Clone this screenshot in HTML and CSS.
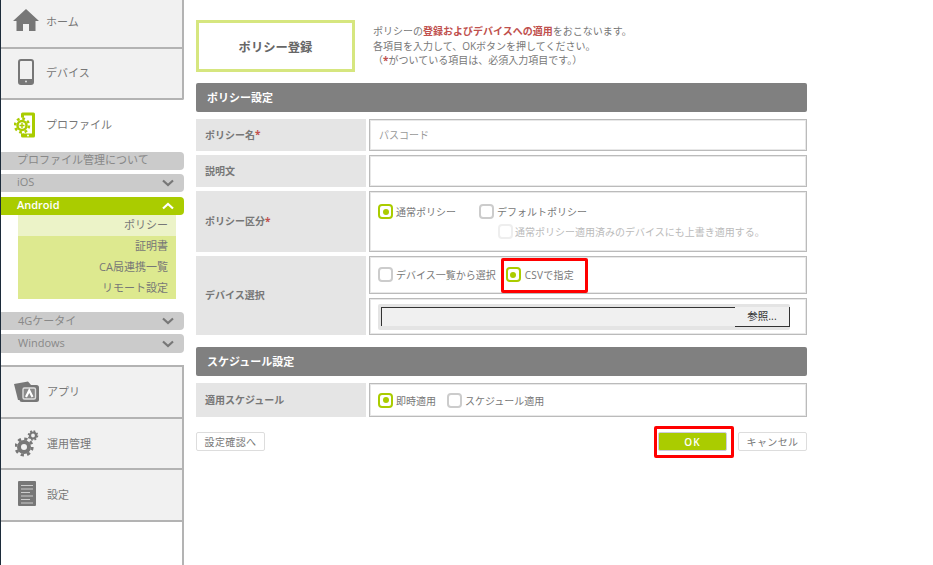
FILE: index.html
```html
<!DOCTYPE html>
<html lang="ja">
<head>
<meta charset="utf-8">
<title>ポリシー登録</title>
<link rel="stylesheet" href="styles.css">
</head>
<body>
<div class="page">
  <aside class="side">
    <a class="nav nav-first">
      <span class="ico"><svg width="26" height="24" viewBox="0 0 26 24"><path fill="#777" d="M13 0 L26 12 L22.500 12 L22.500 22 L16 22 L16 15 L10 15 L10 22 L3.500 22 L3.500 12 L0 12 Z"/></svg></span>
      <span>ホーム</span>
    </a>
    <a class="nav nav-device">
      <span class="ico"><svg width="16" height="26" viewBox="0 0 16 26"><rect x="1" y="1" width="14" height="24" rx="2" fill="none" stroke="#777" stroke-width="2"/><rect x="1" y="20" width="14" height="5" fill="#777"/><circle cx="8" cy="22.500" r="1" fill="#ddd"/></svg></span>
      <span>デバイス</span>
    </a>
    <a class="nav-active">
      <span class="ico"><svg width="24" height="28" viewBox="0 0 24 28"><rect x="7" y="2.500" width="14" height="25" rx="1.500" fill="#aacc00"/><rect x="10" y="5.500" width="8" height="18" fill="#fff"/><circle cx="14" cy="25.500" r="1" fill="#fff"/><circle cx="8" cy="15.500" r="8" fill="#fff"/><circle cx="8" cy="15.500" r="7" fill="none" stroke="#aacc00" stroke-width="2.500" stroke-dasharray="2.750 2.750"/><circle cx="8" cy="15.500" r="4.500" fill="#fff" stroke="#aacc00" stroke-width="2.500"/><path stroke="#aacc00" stroke-width="1.400" d="M8 13 V18 M5.500 15.500 H10.500"/></svg></span>
      <span>プロファイル</span>
    </a>
    <a class="pill pill-about">プロファイル管理について</a>
    <a class="pill pill-ios"><span>iOS</span><svg class="chev" width="12" height="8" viewBox="0 0 12 8"><path d="M1 1.500 L6 6 L11 1.500" fill="none" stroke="#777" stroke-width="2.200"/></svg></a>
    <a class="pill pill-open"><span>Android</span><svg class="chev" width="12" height="8" viewBox="0 0 12 8"><path d="M1 6.500 L6 2 L11 6.500" fill="none" stroke="#fff" stroke-width="2.200"/></svg></a>
    <ul class="sub">
      <li class="sub-on">ポリシー</li>
      <li>証明書</li>
      <li>CA局連携一覧</li>
      <li>リモート設定</li>
    </ul>
    <a class="pill pill-4g"><span>4Gケータイ</span><svg class="chev" width="12" height="8" viewBox="0 0 12 8"><path d="M1 1.500 L6 6 L11 1.500" fill="none" stroke="#777" stroke-width="2.200"/></svg></a>
    <a class="pill pill-win"><span>Windows</span><svg class="chev" width="12" height="8" viewBox="0 0 12 8"><path d="M1 1.500 L6 6 L11 1.500" fill="none" stroke="#777" stroke-width="2.200"/></svg></a>
    <div class="lower">
      <a class="nav nav-app">
        <span class="ico"><svg width="26" height="24" viewBox="0 0 26 24"><path fill="#777" d="M0 5 L14 2.500 L17 6 L8 7 L7 21 L4 21 Z"/><rect x="5.500" y="6" width="19.500" height="17" rx="2.500" fill="#777"/><rect x="9" y="9" width="12.500" height="11" rx="1.500" fill="#8a8a8a" stroke="#ddd" stroke-width="1.400"/><path fill="none" stroke="#fff" stroke-width="2.200" d="M12 18 L15.250 11.500 L18.500 18"/></svg></span>
        <span>アプリ</span>
      </a>
      <a class="nav nav-ops">
        <span class="ico"><svg width="24" height="28" viewBox="0 0 24 28"><g fill="none" stroke="#777"><circle cx="9" cy="18" r="5" stroke-width="4"/><circle cx="9" cy="18" r="8.200" stroke-width="2.800" stroke-dasharray="3.220 3.220"/><circle cx="18" cy="6.500" r="3" stroke-width="2.200"/><circle cx="18" cy="6.500" r="4.500" stroke-width="1.600" stroke-dasharray="1.770 1.770"/></g></svg></span>
        <span>運用管理</span>
      </a>
      <a class="nav nav-set">
        <span class="ico"><svg width="18" height="26" viewBox="0 0 18 26"><rect width="18" height="25" rx="1" fill="#777"/><path stroke="#ccc" stroke-width="1" d="M3 4.500 H15 M3 8 H15 M3 11.500 H12 M3 15 H15 M3 18.500 H12 M3 22 H15"/></svg></span>
        <span>設定</span>
      </a>
    </div>
  </aside>

  <main class="main">
    <header class="head">
      <h1 class="title">ポリシー登録</h1>
      <div class="lead">
        <p>ポリシーの<strong>登録およびデバイスへの適用</strong>をおこないます。</p>
        <p>各項目を入力して、OKボタンを押してください。</p>
        <p>（<strong>*</strong>がついている項目は、必須入力項目です。）</p>
      </div>
    </header>

    <h2 class="bar">ポリシー設定</h2>
    <div class="row row-name">
      <div class="lab">ポリシー名<em>*</em></div>
      <div class="fld fld-name"><span class="ph">パスコード</span></div>
    </div>
    <div class="row row-desc">
      <div class="lab">説明文</div>
      <div class="fld"></div>
    </div>
    <div class="row row-kind">
      <div class="lab">ポリシー区分<em>*</em></div>
      <div class="fld fld-kind">
        <div class="opts">
          <span class="opt"><i class="rd on"></i>通常ポリシー</span>
          <span class="opt opt-default"><i class="rd"></i>デフォルトポリシー</span>
        </div>
        <div class="opt opt-off"><i class="rd off"></i>通常ポリシー適用済みのデバイスにも上書き適用する。</div>
      </div>
    </div>
    <div class="row row-dev">
      <div class="lab">デバイス選択</div>
      <div class="stack">
        <div class="fld fld-a">
          <span class="opt"><i class="rd"></i>デバイス一覧から選択</span>
          <span class="opt opt-csv"><i class="rd on"></i><span class="csv-text">CSVで指定</span><b class="mark mark-csv"></b></span>
        </div>
        <div class="fld fld-b">
          <div class="file"><span class="file-box"></span><span class="file-btn">参照...</span></div>
        </div>
      </div>
    </div>

    <h2 class="bar bar-2">スケジュール設定</h2>
    <div class="row row-sch">
      <div class="lab">適用スケジュール</div>
      <div class="fld">
        <span class="opt"><i class="rd on"></i>即時適用</span>
        <span class="opt opt-sch"><i class="rd"></i>スケジュール適用</span>
      </div>
    </div>

    <footer class="foot">
      <a class="btn">設定確認へ</a>
      <div class="foot-r">
        <a class="btn btn-ok">OK<b class="mark mark-ok"></b></a>
        <a class="btn">キャンセル</a>
      </div>
    </footer>
  </main>
</div>
</body>
</html>
```

FILE: styles.css
```css
* { box-sizing: border-box; }
html, body { margin: 0; padding: 0; background: #fff; }
body {
  font-family: "Open Sans", "Noto Sans CJK JP", sans-serif;
  font-size: 10px;
  color: #777;
  overflow: hidden;
}
.page { display: flex; height: 565px; }

/* sidebar */
.side {
  width: 184px;
  flex: none;
  border-left: 1px solid #1c2b3a;
  height: 565px;
  display: flex;
  flex-direction: column;
  font-size: 11px;
}
.nav, .nav-active { display: flex; align-items: center; color: #777; }
.nav {
  background: #f1f1f1;
  border-right: 2px solid #b3b3b3;
  border-bottom: 2px solid #b3b3b3;
}
.nav-first { height: 49px; padding-bottom: 5px; }
.nav-device { height: 51px; border-bottom-right-radius: 2px; padding-bottom: 4px; }
.nav-active { height: 52px; padding-bottom: 4px; }
.ico { width: 45px; display: flex; justify-content: center; padding-left: 5px; flex: none; }
.pill {
  display: flex;
  align-items: center;
  justify-content: space-between;
  height: 18px;
  background: #cbcbcb;
  border-radius: 0 4px 4px 0;
  padding: 0 10px 2px 16px;
  color: #888;
  font-size: 11px;
  line-height: 16px;
}
.pill .chev { margin-top: 2px; }
.pill-ios { margin-top: 4px; }
.pill-open { margin-top: 5px; background: #aacc00; color: #fff; font-weight: 600; }
.pill-4g { margin-top: 13px; padding-bottom: 0; padding-left: 17px; }
.pill-4g .chev { margin-top: 0; }
.pill-win { margin-top: 4px; height: 19px; padding-left: 17px; padding-bottom: 2px; }
.chev { flex: none; }
.sub {
  list-style: none;
  margin: 0 8px 0 17px;
  padding: 0;
  background: #dde98f;
  color: #777;
  font-size: 11px;
  text-align: right;
}
.sub li { height: 21px; line-height: 20px; padding-right: 8px; }
.sub-on { background: #ecf3c8; }
.lower {
  margin-top: 12px;
  flex: 1;
  border-top: 2px solid #b3b3b3;
  border-right: 2px solid #b3b3b3;
}
.lower .nav { border-right: 0; height: 51px; padding-bottom: 2px; }
.lower .nav-app { height: 52px; }
.lower .nav-set { height: 52px; }
.lower .ico { width: 46px; }

/* main */
.main { width: 611px; margin-left: 12px; padding-top: 20px; flex: none; }
.head { display: flex; height: 52px; }
.title {
  width: 159px;
  height: 52px;
  margin: 0;
  border: 3px solid #d6e67f;
  padding-top: 2px;
  display: flex;
  align-items: center;
  justify-content: center;
  font-size: 12.300px;
  font-weight: 700;
  color: #666;
}
.lead { margin: 4px 0 0 18px; line-height: 14.500px; }
.lead p { margin: 0; }
.lead strong { color: #c0504d; }
.bar {
  margin: 11px 0 0;
  height: 29px;
  background: #808080;
  border-radius: 2px;
  color: #fff;
  font-size: 11px;
  font-weight: 700;
  line-height: 30px;
  padding-left: 11px;
}
.bar-2 { margin-top: 12px; }
.row { display: flex; gap: 3px; margin-top: 4px; }
.row-name { margin-top: 7px; height: 32px; }
.row-desc { height: 32px; }
.row-kind { height: 61px; margin-top: 4px; }
.row-dev { height: 79px; }
.row-sch { height: 34px; margin-top: 7px; }
.lab {
  width: 170px;
  flex: none;
  background: #e5e5e5;
  display: flex;
  align-items: center;
  padding: 0 0 2px 9px;
  font-weight: 700;
  color: #777;
}
.lab em { color: #c0504d; font-style: normal; }
.fld {
  flex: 1;
  border: 1px solid #bbb;
  box-shadow: inset 0 0 0 1px #e8e8e8;
  display: flex;
  align-items: center;
  padding-left: 8px;
  min-width: 0;
}
.fld-name { padding-bottom: 2px; }
.ph { color: #999; padding-left: 1px; }
.fld-kind { display: block; padding-top: 12px; }
.opts { display: flex; }
.opt { display: inline-flex; align-items: center; }
.opt-default { margin-left: 23px; }
.opt-off { color: #bbb; margin: 5px 0 0 120px; display: flex; }
.rd {
  width: 15px;
  height: 15px;
  flex: none;
  margin-right: 3px;
  border: 2px solid #ccc;
  border-radius: 4px;
  background: #fff;
  display: flex;
  align-items: center;
  justify-content: center;
}
.rd.on { border-color: #aacc00; }
.rd.on::after {
  content: "";
  width: 6px;
  height: 6px;
  border-radius: 50%;
  background: #aacc00;
}
.rd.off { border-color: #eee; margin-right: 2px; }
.stack { flex: 1; display: flex; flex-direction: column; gap: 4px; min-width: 0; }
.fld-a { height: 32px; padding-bottom: 1px; }
.fld-b { height: 43px; }
.opt-csv { margin-left: 10px; position: relative; }
.opt-csv .rd { margin-right: 4px; }
.csv-text { letter-spacing: 0.250px; }
.opt-sch { margin-left: 11px; }
.mark { position: absolute; border: 3px solid #f00; border-radius: 2px; }
.mark-csv { left: -5px; top: -9px; height: 35px; width: 87px; }
.file {
  width: 412px;
  height: 26px;
  background: #e4e4e4;
  border-radius: 2px;
  display: flex;
  align-items: center;
  padding-left: 3px;
}
.file-box {
  width: 354px;
  height: 19px;
  background: #f0f0f0;
  border-top: 1px solid #333;
  border-left: 1px solid #333;
}
.file-btn {
  width: 55px;
  height: 20px;
  background: #f0f0f0;
  border-right: 1px solid #333;
  border-bottom: 1px solid #333;
  color: #333;
  font-size: 10.500px;
  text-align: center;
  line-height: 18px;
}
.foot { display: flex; justify-content: space-between; margin-top: 15px; }
.foot-r { display: flex; gap: 11px; }
.btn {
  width: 69px;
  height: 19px;
  border: 1px solid #ddd;
  border-radius: 2px;
  background: #fff;
  color: #777;
  display: flex;
  align-items: center;
  justify-content: center;
  letter-spacing: 0.400px;
}
.btn-ok {
  position: relative;
  background: #aacc00;
  border-color: #ccd;
  color: #fff;
  font-weight: 600;
  letter-spacing: 1.200px;
}
.mark-ok { left: -5px; top: -7px; width: 80px; height: 32px; }
```
